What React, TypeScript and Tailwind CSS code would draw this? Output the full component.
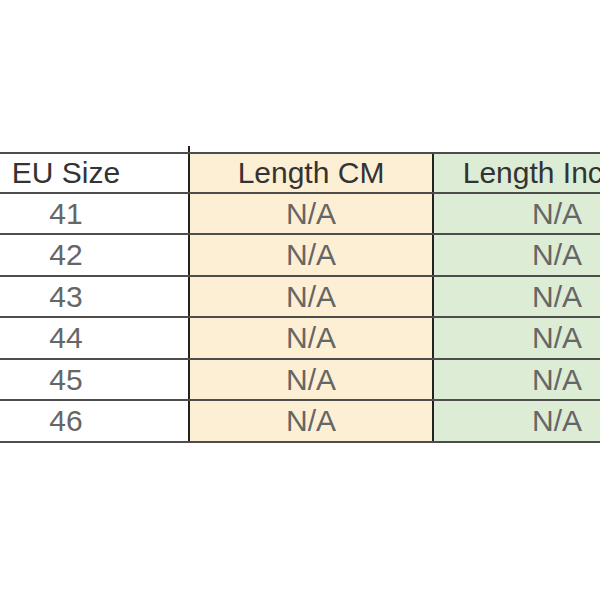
const rows = [
  { size: "41", h: "h-[41px]" },
  { size: "42", h: "h-[42px]" },
  { size: "43", h: "h-[41px]" },
  { size: "44", h: "h-[42px]" },
  { size: "45", h: "h-[41px]" },
  { size: "46", h: "h-[42px]" },
];

const font = { fontFamily: '"Liberation Sans", Arial, sans-serif' };

export default function App() {
  return (
    <div className="h-[600px] w-[600px] overflow-hidden bg-white" style={font}>
      <div className="ml-[-56px] w-[736px] pt-[146px]">
        {/* vertical rule poking above the table */}
        <div className="flex h-[6px]">
          <div className="w-[246px] border-r-2 border-[#222]" />
        </div>
        <div className="border-t-2 border-[#4d4d4d]">
          <div className="flex h-[40px] border-b-2 border-[#4d4d4d] text-[30px] leading-none text-[#333]">
            <div className="flex w-[246px] items-center justify-center border-r-2 border-[#222] bg-white">
              EU Size
            </div>
            <div className="flex w-[244px] items-center justify-center border-r-2 border-[#222] bg-[#fdefd4]">
              Length CM
            </div>
            <div className="flex w-[246px] items-center justify-center bg-[#dcecd5]">
              Length Inches
            </div>
          </div>
          {rows.map((r) => (
            <div
              key={r.size}
              className={`flex ${r.h} border-b-2 border-[#4d4d4d] text-[30px] leading-none text-[#666]`}
            >
              <div className="flex w-[246px] items-center justify-center border-r-2 border-[#222] bg-white">
                {r.size}
              </div>
              <div className="flex w-[244px] items-center justify-center border-r-2 border-[#222] bg-[#fdefd4]">
                N/A
              </div>
              <div className="flex w-[246px] items-center justify-center bg-[#dcecd5]">
                N/A
              </div>
            </div>
          ))}
        </div>
      </div>
    </div>
  );
}
